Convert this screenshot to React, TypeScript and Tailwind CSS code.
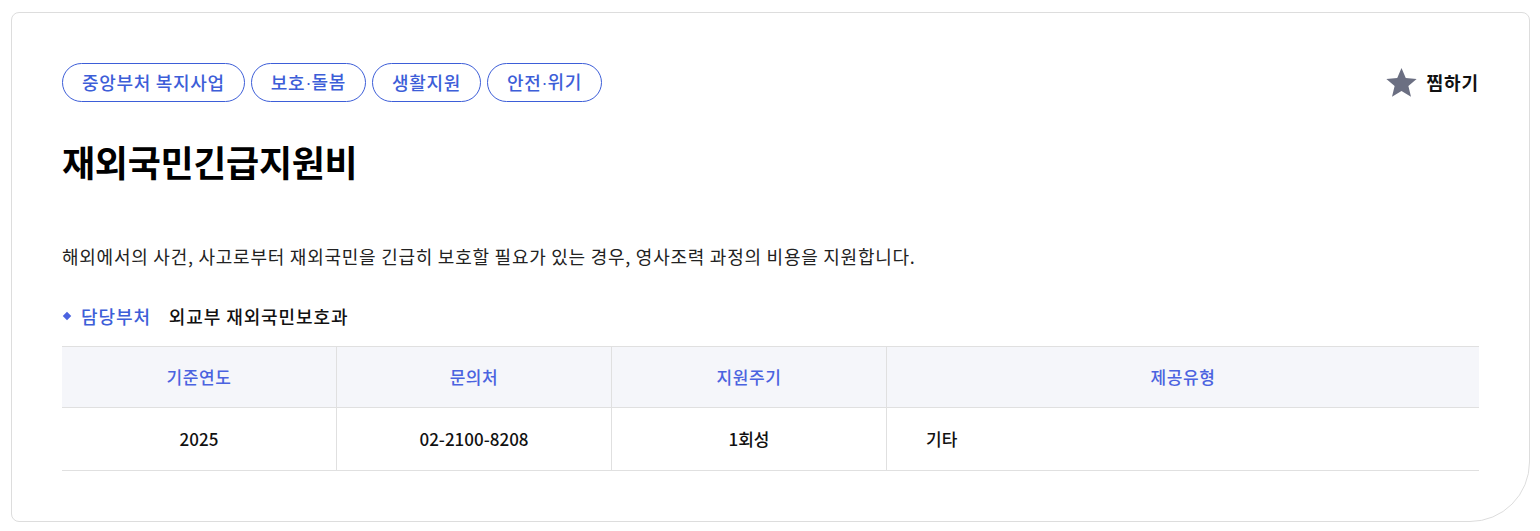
const tags = ["중앙부처 복지사업", "보호·돌봄", "생활지원", "안전·위기"];

const font = { fontFamily: '"Noto Sans CJK KR", "Noto Sans", sans-serif' };

// Noto CJK draws the middle dot full-width; the reference uses a narrow one
function TagText({ text }: { text: string }) {
  const parts = text.split("·");
  return (
    <>
      {parts.map((p, i) => (
        <span key={i}>
          {i > 0 && (
            <span className="tracking-normal" style={{ fontFamily: '"Liberation Sans", sans-serif' }}>
              ·
            </span>
          )}
          {p}
        </span>
      ))}
    </>
  );
}

export default function App() {
  return (
    <div className="bg-white w-[1540px] h-[531px] pt-3 pl-[11px]" style={font}>
      <div className="w-[1519px] h-[510px] border border-[#dddddd] rounded-tl-lg rounded-tr-lg rounded-bl-lg rounded-br-[60px] pl-[50px] pr-[50px] pt-[50px]">
        <div className="flex items-center justify-between">
          <div className="flex gap-[6px]">
            {tags.map((t) => (
              <span
                key={t}
                className="h-[39px] px-[19px] flex items-center rounded-full border border-[#3d5ed8] text-[#3d5ed8] text-[18px] tracking-[0.7px] font-medium"
              >
                <TagText text={t} />
              </span>
            ))}
          </div>
          <button className="flex items-center gap-[9px] text-[#111] text-[18px] tracking-[0.9px] font-bold">
            <svg width="33" height="33" viewBox="0 0 24 24" fill="#6b6f82">
              <path d="M12 1.5l3.1 7.3 7.9.6-6 5.2 1.9 7.7L12 18.2l-6.9 4.1 1.9-7.7-6-5.2 7.9-.6z" />
            </svg>
            찜하기
          </button>
        </div>

        <h1 className="mt-[37px] text-[36px] font-bold text-black leading-[44px] tracking-[-0.3px]">
          재외국민긴급지원비
        </h1>

        <p className="mt-[60px] text-[18px] text-[#222] leading-[26px] tracking-[0.75px]">
          해외에서의 사건, 사고로부터 재외국민을 긴급히 보호할 필요가 있는 경우, 영사조력 과정의 비용을 지원합니다.
        </p>

        <div className="mt-[34px] flex items-center text-[18px] tracking-[0.9px] leading-[26px]">
          <span className="w-[6px] h-[6px] bg-[#4b63e0] rotate-45 ml-[2px] mr-[11px]" />
          <span className="text-[#3d5ed8] font-medium">담당부처</span>
          <span className="ml-[18px] text-[#111] font-medium">외교부 재외국민보호과</span>
        </div>

        <div className="mt-[17px] border-t border-b border-[#e0e0e0] text-[17px]">
          <div className="grid grid-cols-[275px_275px_275px_1fr] bg-[#f5f6fa] border-b border-[#e0e0e0] h-[61px] text-[#4b63e0] font-medium tracking-[0.6px]">
            <div className="flex items-center justify-center border-r border-[#e0e0e0]">기준연도</div>
            <div className="flex items-center justify-center border-r border-[#e0e0e0]">문의처</div>
            <div className="flex items-center justify-center border-r border-[#e0e0e0]">지원주기</div>
            <div className="flex items-center justify-center">제공유형</div>
          </div>
          <div className="grid grid-cols-[275px_275px_275px_1fr] h-[62px] text-[#111] font-medium">
            <div className="flex items-center justify-center border-r border-[#e0e0e0]">2025</div>
            <div className="flex items-center justify-center border-r border-[#e0e0e0]">02-2100-8208</div>
            <div className="flex items-center justify-center border-r border-[#e0e0e0]">1회성</div>
            <div className="flex items-center pl-[39px]">기타</div>
          </div>
        </div>
      </div>
    </div>
  );
}
